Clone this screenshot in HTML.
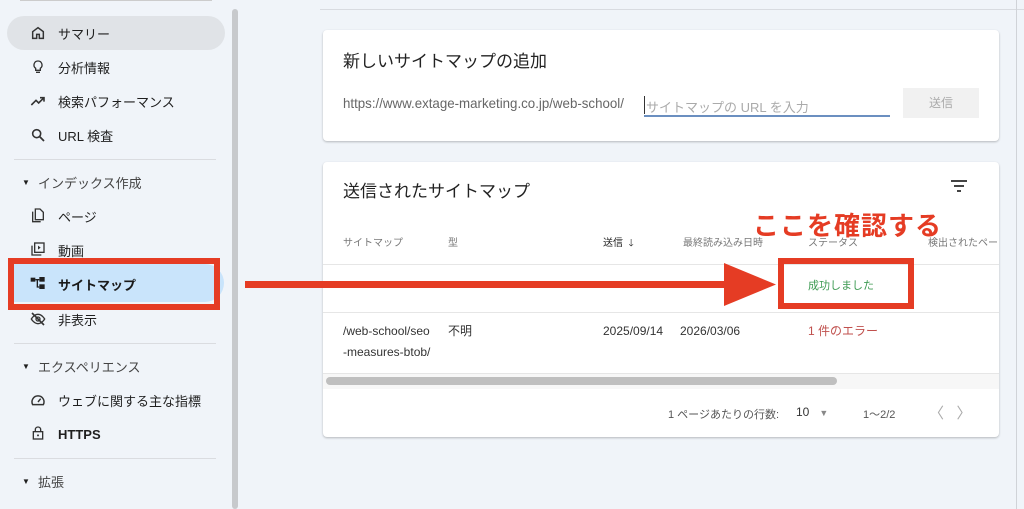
<!DOCTYPE html>
<html><head><meta charset="utf-8"><style>
*{margin:0;padding:0;box-sizing:border-box}
body{width:1024px;height:509px;overflow:hidden;background:#f0f4f9;font-family:"Liberation Sans","Noto Sans CJK JP",sans-serif;position:relative;color:#1f1f1f}
.a{position:absolute}
.nav{position:absolute;left:30px;font-size:13px;color:#1f1f1f;display:flex;align-items:center;height:20px}
.card{position:absolute;background:#fff;border-radius:4px;box-shadow:0 1px 2px rgba(0,0,0,.25)}
.th{position:absolute;font-size:10px;color:#777}
.td{position:absolute;font-size:12px;color:#333}
.red{border:6px solid #e53c24;position:absolute}
</style></head><body>
<div class="a" style="left:20px;top:0;width:192px;height:1px;background:#ccc"></div>
<div class="a" style="left:7px;top:16px;width:218px;height:34px;border-radius:17px;background:#e0e3e7"></div>
<div class="a" style="left:232px;top:9px;width:6px;height:500px;border-radius:3px;background:#c7c9cc"></div>
<svg class="a" style="left:30px;top:25px" width="16" height="16" viewBox="0 0 24 24"><path d="M4 10l8-6 8 6v10h-6v-6h-4v6H4z" fill="none" stroke="#333" stroke-width="2.2"/></svg>
<div class="nav" style="left:58px;top:23px">サマリー</div>
<svg class="a" style="left:30px;top:59px" width="16" height="16" viewBox="0 0 24 24"><path d="M12 3a6 6 0 0 0-3.5 10.9V17h7v-3.1A6 6 0 0 0 12 3zM9 20h6" fill="none" stroke="#333" stroke-width="2"/></svg>
<div class="nav" style="left:58px;top:57px">分析情報</div>
<svg class="a" style="left:29px;top:93px" width="18" height="16" viewBox="0 0 24 24"><path d="M2 18l7-7 4 4 8-8M15 7h6v6" fill="none" stroke="#333" stroke-width="2.4"/></svg>
<div class="nav" style="left:58px;top:91px">検索パフォーマンス</div>
<svg class="a" style="left:30px;top:127px" width="16" height="16" viewBox="0 0 24 24"><circle cx="10" cy="10" r="6" fill="none" stroke="#333" stroke-width="2.4"/><path d="M14.5 14.5L21 21" stroke="#333" stroke-width="2.6"/></svg>
<div class="nav" style="left:58px;top:125px">URL 検査</div>
<div class="a" style="left:14px;top:159px;width:202px;height:1px;background:#dadce0"></div>
<div class="nav" style="left:22px;top:172px;font-size:8px">▼</div>
<div class="nav" style="left:38px;top:172px;color:#444">インデックス作成</div>
<svg class="a" style="left:30px;top:207px" width="16" height="16" viewBox="0 0 24 24"><path d="M8 3h7l5 5v11H8zM4 7v15h12" fill="none" stroke="#333" stroke-width="2"/></svg>
<div class="nav" style="left:58px;top:206px">ページ</div>
<svg class="a" style="left:30px;top:241px" width="16" height="16" viewBox="0 0 24 24"><rect x="7" y="3" width="14" height="14" fill="none" stroke="#333" stroke-width="2"/><path d="M3 7v14h14" fill="none" stroke="#333" stroke-width="2"/><path d="M12 7v6l4-3z" fill="#333"/></svg>
<div class="nav" style="left:58px;top:240px">動画</div>
<div class="a" style="left:8px;top:264px;width:216px;height:38px;border-radius:0 19px 19px 0;background:#c9e4fb"></div>
<svg class="a" style="left:30px;top:276px" width="16" height="14" viewBox="0 0 24 20"><rect x="1" y="2" width="7" height="6" fill="#1f1f1f"/><rect x="14" y="1" width="8" height="7" fill="#1f1f1f"/><rect x="14" y="12" width="8" height="7" fill="#1f1f1f"/><path d="M8 5h6M11 5v11h3" stroke="#1f1f1f" stroke-width="2" fill="none"/></svg>
<div class="nav" style="left:58px;top:274px;font-weight:bold;color:#1a1a1a">サイトマップ</div>
<div class="red" style="left:8px;top:258px;width:212px;height:52px"></div>
<svg class="a" style="left:30px;top:311px" width="16" height="16" viewBox="0 0 24 24"><path d="M2 12s4-7 10-7 10 7 10 7-4 7-10 7S2 12 2 12z" fill="none" stroke="#333" stroke-width="2"/><circle cx="12" cy="12" r="3" fill="none" stroke="#333" stroke-width="2"/><path d="M3 3l18 18" stroke="#333" stroke-width="2.4"/></svg>
<div class="nav" style="left:58px;top:309px">非表示</div>
<div class="a" style="left:14px;top:343px;width:202px;height:1px;background:#dadce0"></div>
<div class="nav" style="left:22px;top:356px;font-size:8px">▼</div>
<div class="nav" style="left:38px;top:356px;color:#444">エクスペリエンス</div>
<svg class="a" style="left:30px;top:392px" width="16" height="16" viewBox="0 0 24 24"><path d="M4 19a9 9 0 1 1 16 0z" fill="none" stroke="#333" stroke-width="2.2"/><path d="M12 15l4-5" stroke="#333" stroke-width="2.2"/></svg>
<div class="nav" style="left:58px;top:390px">ウェブに関する主な指標</div>
<svg class="a" style="left:30px;top:425px" width="16" height="16" viewBox="0 0 24 24"><rect x="5" y="10" width="14" height="11" fill="none" stroke="#333" stroke-width="2"/><path d="M8 10V7a4 4 0 0 1 8 0v3" fill="none" stroke="#333" stroke-width="2"/><circle cx="12" cy="15.5" r="1.5" fill="#333"/></svg>
<div class="nav" style="left:58px;top:424px;font-weight:bold">HTTPS</div>
<div class="a" style="left:14px;top:458px;width:202px;height:1px;background:#dadce0"></div>
<div class="nav" style="left:22px;top:471px;font-size:8px">▼</div>
<div class="nav" style="left:38px;top:471px;color:#444">拡張</div>
<div class="a" style="left:320px;top:9px;width:704px;height:1px;background:#d8dbe0"></div>
<div class="a" style="left:1016px;top:0;width:1px;height:509px;background:#d0d3d8"></div>
<div class="card" style="left:323px;top:30px;width:676px;height:111px">
 <div class="a" style="left:20px;top:17px;font-size:17px;color:#222">新しいサイトマップの追加</div>
 <div class="a" style="left:20px;top:65px;font-size:14px;color:#666;white-space:nowrap;transform:scaleX(.95);transform-origin:0 0">https://www.extage-marketing.co.jp/web-school/</div>
 <div class="a" style="left:321px;top:66px;width:1px;height:18px;background:#333"></div>
 <div class="a" style="left:323px;top:67px;font-size:13px;color:#aaa">サイトマップの URL を入力</div>
 <div class="a" style="left:321px;top:85px;width:246px;height:2px;background:#6b8fc0"></div>
 <div class="a" style="left:580px;top:58px;width:76px;height:30px;background:#f1f1f1;color:#aaa;font-size:12px;text-align:center;line-height:30px">送信</div>
</div>
<div class="card" style="left:323px;top:162px;width:676px;height:275px">
 <div class="a" style="left:20px;top:15px;font-size:17px;color:#222">送信されたサイトマップ</div>
 <svg class="a" style="left:627px;top:17px" width="18" height="14" viewBox="0 0 18 14"><path d="M1 2h16M4 7h10M7 12h4" stroke="#444" stroke-width="2"/></svg>
 <div class="th" style="left:20px;top:72px">サイトマップ</div>
 <div class="th" style="left:125px;top:72px">型</div>
 <div class="th" style="left:280px;top:72px;color:#222">送信 &nbsp;🡓</div>
 <div class="th" style="left:360px;top:72px">最終読み込み日時</div>
 <div class="th" style="left:485px;top:72px">ステータス</div>
 <div class="th" style="left:605px;top:72px;white-space:nowrap">検出されたペー</div>
 <div class="a" style="left:0;top:102px;width:676px;height:1px;background:#e6e6e6"></div>
 <div class="td" style="left:485px;top:115px;color:#3c9a52;font-size:11px">成功しました</div>
 <div class="a" style="left:0;top:150px;width:676px;height:1px;background:#e6e6e6"></div>
 <div class="td" style="left:20px;top:159px;line-height:21px">/web-school/seo<br>-measures-btob/</div>
 <div class="td" style="left:125px;top:161px;line-height:17px">不明</div>
 <div class="td" style="left:280px;top:161px;line-height:17px">2025/09/14</div>
 <div class="td" style="left:357px;top:161px;line-height:17px">2026/03/06</div>
 <div class="td" style="left:485px;top:161px;line-height:17px;color:#c0504d">1 件のエラー</div>
 <div class="a" style="left:0;top:211px;width:676px;height:16px;background:#f7f7f7;border-top:1px solid #e6e6e6"></div>
 <div class="a" style="left:3px;top:215px;width:511px;height:8px;border-radius:4px;background:#bfbfbf"></div>
 <div class="td" style="left:345px;top:244px;font-size:11px;color:#555">1 ページあたりの行数:</div>
 <div class="td" style="left:473px;top:243px;font-size:12px">10 &nbsp;&nbsp;<span style="color:#888;font-size:9px">▼</span></div>
 <div class="td" style="left:540px;top:244px;font-size:11px;color:#555">1〜2/2</div>
 <div class="td" style="left:606px;top:240px;font-size:15px;color:#aaa">〈 &nbsp;&nbsp;〉</div>
</div>
<div class="a" style="left:245px;top:281px;width:485px;height:7px;background:#e53c24"></div>
<svg class="a" style="left:724px;top:263px" width="52" height="43"><path d="M0 0L52 21.5 0 43z" fill="#e53c24"/></svg>
<div class="red" style="left:778px;top:258px;width:136px;height:51px"></div>
<div class="a" style="left:753px;top:206px;font-size:26px;font-weight:bold;color:#e53c24;letter-spacing:1px">ここを確認する</div>
</body></html>
